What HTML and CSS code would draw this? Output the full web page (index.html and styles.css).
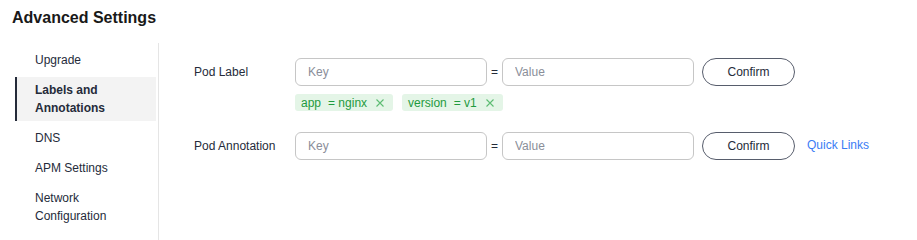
FILE: index.html
```html
<!DOCTYPE html>
<html lang="en">
<head>
<meta charset="utf-8">
<title>Advanced Settings</title>
<link rel="stylesheet" href="styles.css">
</head>
<body>
<div class="page">
  <h1 class="title">Advanced Settings</h1>
  <div class="layout">
    <nav class="sidebar">
      <div class="nav-item">Upgrade</div>
      <div class="nav-item active">Labels and<br>Annotations</div>
      <div class="nav-item">DNS</div>
      <div class="nav-item">APM Settings</div>
      <div class="nav-item">Network<br>Configuration</div>
    </nav>
    <main class="panel">
      <div class="field">
        <div class="field-label">Pod Label</div>
        <div class="field-body">
          <div class="kv-row">
            <input class="kv-input" type="text" placeholder="Key">
            <span class="eq">=</span>
            <input class="kv-input" type="text" placeholder="Value">
            <button class="btn-confirm" type="button">Confirm</button>
          </div>
          <div class="tags">
            <span class="tag"><span class="tag-key">app</span><span class="tag-val">= nginx</span><svg class="tag-close" viewBox="0 0 8 8" width="8" height="8"><path d="M0.5 0.5 L7.5 7.5 M7.5 0.5 L0.5 7.5" stroke="currentColor" stroke-width="1.1" fill="none"/></svg></span>
            <span class="tag"><span class="tag-key">version</span><span class="tag-val">= v1</span><svg class="tag-close" viewBox="0 0 8 8" width="8" height="8"><path d="M0.5 0.5 L7.5 7.5 M7.5 0.5 L0.5 7.5" stroke="currentColor" stroke-width="1.1" fill="none"/></svg></span>
          </div>
        </div>
      </div>
      <div class="field field-second">
        <div class="field-label">Pod Annotation</div>
        <div class="field-body">
          <div class="kv-row">
            <input class="kv-input" type="text" placeholder="Key">
            <span class="eq">=</span>
            <input class="kv-input" type="text" placeholder="Value">
            <button class="btn-confirm" type="button">Confirm</button>
            <a class="quick-link" href="#">Quick Links</a>
          </div>
        </div>
      </div>
    </main>
  </div>
</div>
</body>
</html>
```

FILE: styles.css
```css
* { box-sizing: border-box; }

html, body {
  margin: 0;
  padding: 0;
  background: #ffffff;
  overflow: hidden;
}

body {
  font-family: "Liberation Sans", Arial, "Noto Sans", sans-serif;
  font-size: 12px;
  color: #252b3a;
}

.page {
  padding: 6px 0 0 12px;
}

.title {
  margin: 0;
  font-size: 16px;
  line-height: 24px;
  font-weight: bold;
  color: #191919;
}

.layout {
  display: flex;
  margin-top: 13px;
  height: 197px;
}

.sidebar {
  width: 147px;
  padding: 4px 0 0 3px;
  border-right: 1px solid #e5e5e5;
  display: flex;
  flex-direction: column;
  gap: 4px;
}

.nav-item {
  width: 141px;
  padding: 4px 0 4px 20px;
  line-height: 18px;
  color: #252b3a;
}

.nav-item.active {
  background: #f3f3f3;
  border-left: 2px solid #252b3a;
  padding-left: 18px;
  font-weight: bold;
}

.panel {
  padding: 15px 0 0 35px;
}

.field {
  display: flex;
}

.field-second {
  margin-top: 21px;
}

.field-label {
  width: 101px;
  line-height: 28px;
  color: #252b3a;
}

.kv-row {
  display: flex;
  align-items: center;
}

.kv-input {
  width: 192px;
  height: 28px;
  border: 1px solid #c6c6c6;
  border-radius: 6px;
  padding: 0 12px;
  font-family: inherit;
  font-size: 12px;
  color: #252b3a;
  background: #fff;
  outline: none;
}

.kv-input::placeholder {
  color: #8a8e99;
}

.eq {
  width: 15px;
  text-align: center;
  color: #252b3a;
}

.btn-confirm {
  margin-left: 8px;
  width: 93px;
  height: 28px;
  border: 1px solid #575d6c;
  border-radius: 14px;
  background: #fff;
  font-family: inherit;
  font-size: 12px;
  color: #252b3a;
  padding: 0;
}

.quick-link {
  margin-left: 12px;
  color: #3a7cf5;
  text-decoration: none;
  margin-top: -2px;
}

.tags {
  display: flex;
  gap: 9px;
  margin-top: 8px;
}

.tag {
  display: inline-flex;
  align-items: center;
  height: 17px;
  padding: 0 9px 0 6px;
  background: #e4f5e7;
  border-radius: 3px;
  color: #1f9a3e;
  white-space: nowrap;
}

.tag-val {
  margin-left: 7px;
}

.tag-close {
  margin-left: 9px;
  color: #5cbc72;
}
```
